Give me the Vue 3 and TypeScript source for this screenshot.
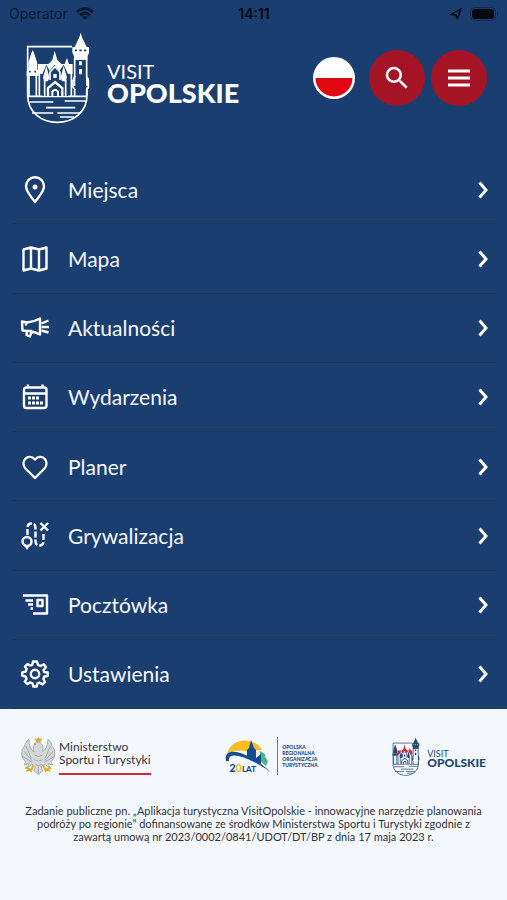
<script setup lang="ts">
interface MenuItem {
  id: string
  label: string
}

const items: MenuItem[] = [
  { id: 'places', label: 'Miejsca' },
  { id: 'map', label: 'Mapa' },
  { id: 'news', label: 'Aktualności' },
  { id: 'events', label: 'Wydarzenia' },
  { id: 'planner', label: 'Planer' },
  { id: 'game', label: 'Grywalizacja' },
  { id: 'postcard', label: 'Pocztówka' },
  { id: 'settings', label: 'Ustawienia' },
]
</script>

<template>
  <div class="screen">
    <svg class="defs" aria-hidden="true">
      <symbol id="crest" viewBox="78 97 192 274">
        <g fill="none" stroke="currentColor" stroke-width="5">
          <path d="M216 140H83V286C83 336 124 367 172 367S261 336 261 286V262" />
          <path d="M84 289H261M88 306H160M194 303H258M138 323H226M96 339H160M172 339H240M180 351H222" />
          <path d="M87 226V288M109 226V288M224 174V232L219 242V262L224 268V288M260 174V232L265 242V264L260 268V288" />
          <path d="M118 222V288M214 222V288" />
        </g>
        <path class="roof" d="M114 192H145L157 180L164 152L172 180L184 192H194L201 174L207 192H218V222H114Z" />
        <path d="M127 288V222L139 194L149 212L164 194L179 212L191 194L204 222V288Z" fill="var(--crest-bg)" />
        <g fill="none" stroke="currentColor" stroke-width="5">
          <path d="M134 240V288M197 240V288M150 240V216L165 200L180 216V240" />
          <path d="M144 288V264L165 246L187 264V288" stroke-width="7" />
        </g>
        <g fill="currentColor">
          <path d="M242 98L246 112L260 141H267V158L262 170V176H223V170L217 158V141H224L238 112Z" />
          <path d="M98 150L103 162L112 190V208L116 213V228H80V213L85 208V190L93 162Z" />
          <path d="M222 168H262V180H222ZM237 184H246V196H237ZM237 207H246V223H237ZM220 232L226 226V258H220ZM258 226L266 234V258H258Z" />
          <path d="M139 198L148 232L144 244H132L129 232ZM191 198L201 232L198 244H186L182 232ZM160 222H170V234H160Z" />
          <path d="M154 288V274Q165 258 177 274V288H171V276Q165 270 160 276V288Z" />
        </g>
        <path d="M225 151H231M238 151H245M252 151H259M87 215H92M103 215H108" stroke="var(--crest-bg)" stroke-width="5" />
      </symbol>
    </svg>

    <div class="status">
      <div class="carrier">
        <span>Operator</span>
        <svg width="18" height="14" viewBox="0 0 18 14" fill="none" stroke="currentColor" stroke-width="3">
          <path d="M1 5Q9-2 17 5M4 8.3Q9 4 14 8.3" />
          <path d="M9 13L6 10Q9 7.8 12 10Z" fill="currentColor" stroke="none" />
        </svg>
      </div>
      <strong class="clock">14:11</strong>
      <div class="indicators">
        <svg width="12" height="12" viewBox="0 0 12 12" fill="none" stroke="currentColor" stroke-width="1.4">
          <path d="M1 6.5L11 1L7.5 11L6 7Z" />
        </svg>
        <svg width="29" height="14" viewBox="0 0 29 14">
          <rect x=".5" y=".5" width="25" height="13" rx="4" fill="none" stroke="#102c50" />
          <rect x="2" y="2" width="22" height="10" rx="3" fill="currentColor" />
          <path d="M27 4.500Q29 7 27 9.500Z" fill="#102c50" />
        </svg>
      </div>
    </div>

    <header class="header">
      <a class="brand" href="#" aria-label="Visit Opolskie">
        <svg class="brand-crest"><use href="#crest" /></svg>
        <span class="brand-name">VISIT<b>OPOLSKIE</b></span>
      </a>
      <div class="actions">
        <button class="flag" type="button" aria-label="Język polski">
          <svg viewBox="0 0 42 42">
            <circle cx="21" cy="21" r="21" fill="#fff" />
            <path d="M2.500 21H39.500A18.500 18.500 0 0 1 2.500 21Z" fill="#e30613" />
          </svg>
        </button>
        <button class="round" type="button" aria-label="Szukaj">
          <svg width="30" height="30" viewBox="0 0 24 24" fill="#fff">
            <path d="M15.500 14h-.79l-.28-.27A6.500 6.500 0 1 0 13.730 14.430l.27.28v.79l5 4.990L20.490 19zM9.500 14a4.500 4.500 0 1 1 0-9 4.500 4.500 0 0 1 0 9z" />
          </svg>
        </button>
        <button class="round" type="button" aria-label="Menu">
          <svg width="30" height="30" viewBox="0 0 30 30" stroke="#fff" stroke-width="3">
            <path d="M4 8H26M4 15H26M4 22H26" />
          </svg>
        </button>
      </div>
    </header>

    <nav class="menu">
      <a v-for="item in items" :key="item.id" class="item" href="#">
        <svg class="icon" viewBox="0 0 30 30">
          <template v-if="item.id === 'places'">
            <path d="M15 27C12 22.500 6 17 6 11.300A9 9 0 0 1 24 11.300C24 17 18 22.500 15 27Z" />
            <circle class="solid" cx="15" cy="12" r="2.500" />
          </template>
          <path v-else-if="item.id === 'map'" d="M3.500 5.500L11 3.500L19 5.500L26.500 3.500V24.500L19 26.500L11 24.500L3.500 26.500ZM11 3.500V24.500M19 5.500V26.500" />
          <template v-else-if="item.id === 'news'">
            <path d="M2 8.500L7 9.500Q14 9 20 5.500V21.500Q15 19 11.500 18.500L10 23.500L6.500 22L7 18L2.500 17.500Z" />
            <path d="M6 10.500V12.500M7 18H12M21.500 10.500L28.500 7.500M21.500 14H29M21.500 17.500L28.500 19.500" />
          </template>
          <template v-else-if="item.id === 'events'">
            <rect x="4" y="5.500" width="22.500" height="20.500" rx="2.500" />
            <path d="M4 11.500H26.500M8 2.500V6M22.500 2.500V6" />
            <path class="dots" d="M8 16H19M8 21H23" />
          </template>
          <path v-else-if="item.id === 'planner'" d="M15 26L5.500 16.500C-.5 9 8.500.5 15 7.500C21.500.5 30.500 9 24.500 16.500Z" />
          <template v-else-if="item.id === 'game'">
            <circle cx="7" cy="20.500" r="4.500" />
            <path class="solid" d="M3.500 23.500L7 29L10.500 23.500L7 25Z" />
            <path class="dash" d="M7.500 14V7Q7.500 2.500 11.500 2.500Q15.500 2.500 15.500 7V20Q15.500 24.500 19.500 24.500Q23.500 24.500 23.500 20V11" />
            <path d="M20.500 2L28 9.500M28 2L20.500 9.500" />
          </template>
          <template v-else-if="item.id === 'postcard'">
            <path d="M3 5.500H27V23.500H13M5.500 10.500H13M8 14.500H13M10.500 18.500H13" />
            <rect x="17.500" y="10" width="5" height="6" />
          </template>
          <template v-else>
            <path d="M13 2.500H17L18 6L20.500 7L23.800 5.200L26 8.200L23.500 11L24.300 13L27.700 13.500V17L24.300 17.500L23.400 20L25 23L22.500 25.500L19.500 23.600L17.500 24.300L16.700 27.500H13.300L12.500 24.300L10 23.400L7.500 25L4.800 22.700L6.500 20L5.600 17.500L2.300 16.800V13.300L5.700 12.600L6.700 10L5 7.500L7.500 5L10 6.600L12.300 5.800Z" />
            <circle cx="15" cy="15" r="4.200" />
          </template>
        </svg>
        <span class="label">{{ item.label }}</span>
        <svg class="chevron" viewBox="0 0 12 20"><path d="M2.500 2.500L9 10L2.500 17.500" /></svg>
      </a>
    </nav>

    <footer class="footer">
      <div class="partners">
        <div class="ministry">
          <svg width="35" height="38" viewBox="0 0 105 114">
            <g fill="#d5d7d8" stroke="#8f9497" stroke-width="2">
              <path d="M46 16Q32 26 39 45Q25 37 23 7Q13 14 10 28Q1 37 2 52Q4 67 14 74L10 84L23 80L19 93L33 82L43 90L38 102L52 112L65 102L60 89L72 82L86 93L82 80L95 84L90 74Q101 66 102 51Q102 37 94 28Q91 14 81 7Q79 37 64 44Q70 25 57 16Z" />
              <path d="M15 27L31 64M8 42L34 72M5 58L34 76M89 27L72 64M97 42L70 72M100 58L70 76M40 54Q52 63 64 54M39 68Q52 77 65 68M43 82L52 87L62 82M52 90V111" />
            </g>
            <g fill="#d9ae32">
              <path d="M41 2L47 6L52 1L57 6L63 2L60 14H45ZM44 16L36 21L45 24Z" />
              <path d="M35 82L29 95L18 88L10 94L20 97L13 104L27 102L31 107L39 89ZM69 82L75 95L85 88L94 94L84 97L91 104L77 102L73 107L65 89Z" />
            </g>
          </svg>
          <span class="ministry-name">Ministerstwo<br />Sportu i Turystyki</span>
        </div>

        <div class="regional">
          <div class="jubilee">
            <svg viewBox="0 0 48 38">
              <path d="M2 18C4 7 14 2 24 4C30 5 35 9 37 13L20 14C10 13 4 15 2 18Z" fill="#f9bd24" />
              <path d="M35 14L40 17V20L43 24L41 29L35 24Z" fill="#47b28c" />
              <path d="M22 13L24 11L26 3L29 11L31 13V21L36 17V27L22 20Z" fill="#164b91" />
              <path d="M1 24C-2 9 20 12 47 36C31 24 2 11 4 24Z" fill="#164b91" />
            </svg>
            <span class="jubilee-text">2<i>0</i><small>LAT</small></span>
          </div>
          <span class="regional-name">OPOLSKA<br />REGIONALNA<br />ORGANIZACJA<br />TURYSTYCZNA</span>
        </div>

        <div class="mini-brand">
          <svg class="mini-crest"><use href="#crest" /></svg>
          <span class="mini-name">VISIT<b>OPOLSKIE</b></span>
        </div>
      </div>
      <p class="note">Zadanie publiczne pn. „Aplikacja turystyczna VisitOpolskie - innowacyjne narzędzie planowania podróży po regionie” dofinansowane ze środków Ministerstwa Sportu i Turystyki zgodnie z zawartą umową nr 2023/0002/0841/UDOT/DT/BP z dnia 17 maja 2023 r.</p>
    </footer>
  </div>
</template>

<style>
body {
  margin: 0;
  background: #f4f8fc;
}
</style>

<style scoped>
.screen {
  display: flex;
  flex-direction: column;
  min-height: 100vh;
  background: #1b3e70;
  color: #f4f8ff;
  font-family: Lato, sans-serif;
}
.defs {
  position: absolute;
  width: 0;
  height: 0;
}
.roof {
  fill: var(--crest-roof);
}
.status {
  display: grid;
  grid-template-columns: 1fr auto 1fr;
  align-items: center;
  height: 28px;
  padding: 0 8px 0 9px;
  color: #050a12;
  font: 14px/20px Inter, sans-serif;
}
.carrier,
.indicators {
  display: flex;
  align-items: center;
  gap: 8px;
}
.carrier {
  color: #0b1c34;
}
.clock {
  font-weight: 600;
}
.indicators {
  justify-content: flex-end;
}
.header {
  display: flex;
  justify-content: space-between;
  align-items: flex-start;
  height: 127px;
  padding: 0 20px 0 26px;
  box-sizing: border-box;
}
.brand {
  display: flex;
  gap: 17px;
  padding-top: 4px;
  color: #fff;
  text-decoration: none;
  --crest-roof: #fff;
  --crest-bg: #1b3e70;
}
.brand-crest {
  width: 64px;
  height: 92px;
}
.brand-name {
  display: flex;
  flex-direction: column;
  padding-top: 29px;
  font-size: 20px;
  line-height: 20px;
}
.brand-name b {
  font-size: 27px;
  font-weight: 900;
  line-height: 24px;
}
.actions {
  display: flex;
  align-items: center;
  gap: 6px;
  padding-top: 22px;
}
.actions button {
  display: grid;
  place-items: center;
  padding: 0;
  border: 0;
  border-radius: 50%;
}
.actions .flag {
  width: 42px;
  height: 42px;
  margin-right: 8px;
  background: none;
}
.flag svg {
  width: 100%;
}
.round {
  width: 56px;
  height: 56px;
  background: #a51424;
}
.menu {
  display: grid;
  grid-auto-rows: 1fr;
  min-height: 554px;
  padding: 0 11px 0 12px;
}
.item {
  display: flex;
  align-items: center;
  padding: 1px 7px 0 8px;
  border-bottom: 1px solid #1b3758;
  color: inherit;
  text-decoration: none;
}
.icon {
  width: 30px;
  height: 30px;
  fill: none;
  stroke: #fff;
  stroke-width: 2.4;
  stroke-linejoin: round;
}
.icon .solid {
  fill: #fff;
  stroke: none;
}
.icon .dots {
  stroke-width: 3;
  stroke-dasharray: 3 1;
}
.icon .dash {
  stroke-dasharray: 6 2;
}
.label {
  flex: 1;
  padding-left: 18px;
  font-size: 21px;
  line-height: 28px;
}
.chevron {
  width: 12px;
  height: 20px;
  fill: none;
  stroke: #fff;
  stroke-width: 3;
}
.footer {
  flex: 1;
  padding: 26px 21px 20px;
  background: #f4f8fc;
  color: #30343a;
}
.partners {
  display: flex;
  justify-content: space-between;
  height: 42px;
}
.ministry {
  display: flex;
  gap: 3px;
  padding-top: 2px;
}
.ministry-name {
  align-self: flex-start;
  padding: 3px 0 7px;
  border-bottom: 2px solid #d72435;
  font-size: 12px;
  line-height: 13px;
}
.regional {
  display: flex;
  gap: 4px;
  color: #164b91;
}
.jubilee {
  position: relative;
  width: 48px;
}
.jubilee svg {
  width: 48px;
  height: 38px;
  margin-top: 2px;
}
.jubilee-text {
  position: absolute;
  left: 4px;
  bottom: 2px;
  font-size: 11px;
  font-weight: 900;
  line-height: 12px;
}
.jubilee-text i {
  color: #f9bd24;
  font-style: normal;
}
.jubilee-text small {
  font-size: 8px;
}
.regional-name {
  align-self: flex-start;
  margin-top: 2px;
  padding: 7px 0 7px 4px;
  border-left: 1px solid #5e7eaa;
  font-size: 5px;
  font-weight: 900;
  line-height: 6px;
}
.mini-brand {
  display: flex;
  gap: 7px;
  padding-top: 2px;
  color: #254875;
  --crest-roof: #c62b3b;
  --crest-bg: #f4f8fc;
}
.mini-crest {
  width: 28px;
  height: 39px;
}
.mini-name {
  display: flex;
  flex-direction: column;
  padding-top: 12px;
  font-size: 9px;
  line-height: 9px;
}
.mini-name b {
  font-size: 12px;
  font-weight: 900;
  line-height: 10px;
}
.note {
  margin: 27px 0 0;
  font-size: 11px;
  line-height: 13px;
  text-align: center;
}
</style>
